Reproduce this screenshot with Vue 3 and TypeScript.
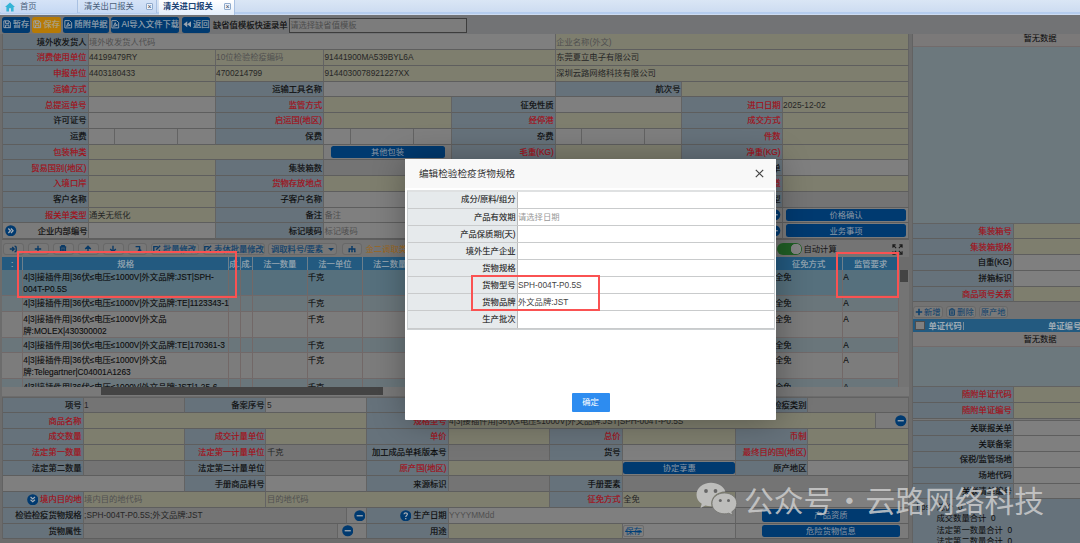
<script setup lang="ts">
type Kind = 'label' | 'need' | 'yellow' | 'white' | 'gray' | 'plain'
interface Cell {
  w: number
  kind: Kind
  text?: string
  hint?: boolean
  btn?: string
  save?: boolean
  dots?: boolean
  lead?: 'right' | 'down' | 'help'
}
type Raw = [number, Kind, string?, Partial<Cell>?]

// Each raw cell is given by its right edge; widths follow from the previous edge.
function rows(start: number, list: Raw[][]): Cell[][] {
  return list.map((r) => {
    let prev = start
    return r.map(([end, kind, text, extra]) => {
      const w = end - prev
      prev = end
      return { w, kind, text, ...extra }
    })
  })
}
const hint = { hint: true }

const header = rows(3, [
  [[88.5, 'label', '境外收发货人'], [555.7, 'white', '境外收发货人代码', hint], [909, 'yellow', '企业名称(外文)', hint]],
  [[88.5, 'need', '消费使用单位'], [215.6, 'yellow', '44199479RY'], [324, 'yellow', '10位检验检疫编码', hint], [555.7, 'yellow', '91441900MA539BYL6A'], [909, 'yellow', '东莞夏立电子有限公司']],
  [[88.5, 'need', '申报单位'], [215.6, 'yellow', '4403180433'], [324, 'yellow', '4700214799'], [555.7, 'yellow', '9144030078921227XX'], [909, 'yellow', '深圳云路网络科技有限公司']],
  [[88.5, 'need', '运输方式'], [215.6, 'yellow'], [324, 'label', '运输工具名称'], [555.7, 'white'], [682.5, 'label', '航次号'], [909, 'yellow']],
  [[88.5, 'need', '总提运单号'], [215.6, 'white'], [324, 'need', '监管方式'], [451.6, 'yellow'], [555.7, 'label', '征免性质'], [682.5, 'white'], [782.6, 'need', '进口日期'], [909, 'yellow', '2025-12-02']],
  [[88.5, 'label', '许可证号'], [215.6, 'white'], [324, 'need', '启运国(地区)'], [451.6, 'yellow'], [555.7, 'need', '经停港'], [682.5, 'yellow'], [782.6, 'need', '成交方式'], [909, 'yellow']],
  [[88.5, 'label', '运费'], [114.7, 'white'], [177.6, 'white'], [215.6, 'white'], [324, 'label', '保费'], [350.6, 'white'], [413.6, 'white'], [451.6, 'white'], [555.7, 'label', '杂费'], [582, 'white'], [645.3, 'white'], [682.5, 'white'], [782.6, 'need', '件数'], [909, 'yellow']],
  [[88.5, 'need', '包装种类'], [324, 'yellow'], [451.6, 'plain', '', { btn: '其他包装' }], [555.7, 'need', '毛重(KG)'], [682.5, 'yellow'], [782.6, 'need', '净重(KG)'], [909, 'yellow']],
  [[88.5, 'need', '贸易国别(地区)'], [215.6, 'yellow'], [324, 'label', '集装箱数'], [451.6, 'gray'], [555.7, 'label'], [682.5, 'white'], [782.6, 'label', '单'], [909, 'white']],
  [[88.5, 'need', '入境口岸'], [215.6, 'yellow'], [324, 'need', '货物存放地点'], [451.6, 'yellow'], [555.7, 'label'], [682.5, 'white'], [782.6, 'need', '道'], [909, 'yellow']],
  [[88.5, 'label', '客户名称'], [215.6, 'yellow'], [324, 'label', '子客户名称'], [451.6, 'white'], [555.7, 'label'], [682.5, 'white'], [782.6, 'label', '型'], [909, 'gray']],
  [[88.5, 'need', '报关单类型'], [215.6, 'yellow', '通关无纸化'], [324, 'label', '备注'], [768, 'white', '备注', hint], [782.6, 'plain', '', { dots: true }], [909, 'plain', '', { btn: '价格确认' }]],
  [[88.5, 'plain', '企业内部编号', { lead: 'right' }], [215.6, 'white'], [324, 'label', '标记唛码'], [768, 'white', '标记唛码', hint], [782.6, 'plain', '', { dots: true }], [909, 'plain', '', { btn: '业务事项' }]],
])

const detail = rows(3, [
  [[83.6, 'label', '项号'], [184.6, 'gray', '1'], [266.5, 'label', '备案序号'], [366.7, 'white', '5'], [448.6, 'label'], [736.5, 'gray'], [808.5, 'label', '检疫类别'], [909, 'gray']],
  [[83.6, 'need', '商品名称'], [366.7, 'yellow'], [448.6, 'need', '规格型号'], [876.5, 'yellow', '4|3|接插件用|36伏≤电压≤1000V|外文品牌:JST|SPH-004T-P0.5S'], [909, 'plain', '', { dots: true }]],
  [[83.6, 'need', '成交数量'], [184.6, 'yellow'], [266.5, 'need', '成交计量单位'], [366.7, 'yellow'], [448.6, 'need', '单价'], [549.6, 'yellow'], [622.7, 'need', '总价'], [736.5, 'yellow'], [808.5, 'need', '币制'], [909, 'yellow']],
  [[83.6, 'need', '法定第一数量'], [184.6, 'yellow'], [266.5, 'need', '法定第一计量单位'], [366.7, 'gray', '千克'], [448.6, 'label', '加工成品单耗版本号'], [549.6, 'gray'], [622.7, 'label', '货号'], [736.5, 'white'], [808.5, 'need', '最终目的国(地区)'], [909, 'yellow']],
  [[83.6, 'label', '法定第二数量'], [184.6, 'gray'], [266.5, 'label', '法定第二计量单位'], [366.7, 'gray'], [448.6, 'need', '原产国(地区)'], [622.7, 'yellow'], [736.5, 'plain', '', { btn: '协定享惠' }], [808.5, 'label', '原产地区'], [909, 'white']],
  [[184.6, 'white'], [266.5, 'label', '手册商品料号'], [366.7, 'white'], [448.6, 'label', '来源标识'], [549.6, 'gray'], [622.7, 'label', '手册要素'], [909, 'gray']],
  [[83.6, 'need', '境内目的地', { lead: 'down' }], [266.5, 'yellow', '境内目的地代码', hint], [549.6, 'yellow', '目的地代码', hint], [622.7, 'need', '征免方式'], [736.5, 'yellow', '全免'], [909, 'white']],
  [[83.6, 'label', '检验检疫货物规格'], [347, 'gray', ';SPH-004T-P0.5S;外文品牌:JST'], [366.7, 'plain', '', { dots: true }], [448.6, 'label', '生产日期', { lead: 'help' }], [736.5, 'white', 'YYYYMMdd', hint], [909, 'plain', '', { btn: '产品资质' }]],
  [[83.6, 'label', '货物属性'], [338, 'gray'], [366.7, 'plain', '', { dots: true }], [448.6, 'label', '用途'], [622.7, 'yellow'], [736.5, 'white', '', { save: true }], [909, 'plain', '', { btn: '危险货物信息' }]],
])

const boxRows: [string, boolean, string][] = [
  ['集装箱号', true, 'yellow'], ['集装箱规格', true, 'yellow'], ['自重(KG)', false, 'white'],
  ['拼箱标识', false, 'white'], ['商品项号关系', true, 'yellow'],
]
const docRows: [string, boolean, string][] = [['随附单证代码', true, 'yellow'], ['随附单证编号', true, 'yellow']]
const linkRows: [string, boolean, string][] = [
  ['关联报关单', false, 'white'], ['关联备案', false, 'white'], ['保税/监管场地', false, 'white'],
  ['场地代码', false, 'white'], ['关联清单编号', false, 'white'],
]

const goods: { lines: string[]; tone: string }[] = [
  { lines: ['4|3|接插件用|36伏≤电压≤1000V|外文品牌:JST|SPH-', '004T-P0.5S'], tone: 'picked' },
  { lines: ['4|3|接插件用|36伏≤电压≤1000V|外文品牌:TE|1123343-1'], tone: 'even' },
  { lines: ['4|3|接插件用|36伏≤电压≤1000V|外文品', '牌:MOLEX|430300002'], tone: 'odd' },
  { lines: ['4|3|接插件用|36伏≤电压≤1000V|外文品牌:TE|170361-3'], tone: 'even' },
  { lines: ['4|3|接插件用|36伏≤电压≤1000V|外文品', '牌:Telegartner|C04001A1263'], tone: 'odd' },
  { lines: ['4|3|接插件用|36伏≤电压≤1000V|外文品牌:JST|1.25-6'], tone: 'even' },
]

const specRows: [string, string, boolean][] = [
  ['成分/原料/组分', '', false], ['产品有效期', '请选择日期', true], ['产品保质期(天)', '', false],
  ['境外生产企业', '', false], ['货物规格', '', false], ['货物型号', 'SPH-004T-P0.5S', false],
  ['货物品牌', '外文品牌:JST', false], ['生产批次', '', false],
]
const forms = [{ name: 'header-form', data: header }, { name: 'detail-form', data: detail }]
</script>

<template>
  <div class="app">
    <nav class="tabs">
      <div class="tab home">
        <svg width="10" height="10" viewBox="0 0 10 10"><path d="M0 5 5 0.5 10 5H8.6V9.6H6V6.3H4V9.6H1.4V5Z" fill="#36b4d6" /></svg>
        首页
      </div>
      <div class="tab">清关出口报关<i>×</i></div>
      <div class="tab on">清关进口报关<i>×</i></div>
    </nav>

    <div class="actions">
      <span class="act a1"><svg class="ai" viewBox="0 0 10 10"><path d="M1 1h6l2 2v6H1ZM3 1v3h4V1M3 9V6h4v3" /></svg>暂存</span>
      <span class="act a2"><svg class="ai" viewBox="0 0 10 10"><path d="M1 1h6l2 2v6H1ZM3 1v3h4V1M3 9V6h4v3" /></svg>保存</span>
      <span class="act a3"><svg class="ai" viewBox="0 0 10 10"><path d="M1 .7h5.5L9 3v6.3H1ZM3 7.5 5 3l.7 2.5L7.5 6 3 7.5" /></svg>随附单据</span>
      <span class="act a4"><svg class="ai" viewBox="0 0 10 10"><path d="M1 .7h5.5L9 3v6.3H1ZM3 7.5 5 3l.7 2.5L7.5 6 3 7.5" /></svg>AI导入文件下载</span>
      <span class="act a5"><svg class="ai solid" viewBox="0 0 10 10"><path d="M5 1.5v7L.5 5ZM9.5 1.5v7L5 5Z" /></svg>返回</span>
      <span class="quick">缺省值模板快速录单</span>
      <span class="template">请选择缺省值模板</span>
    </div>

    <div class="body">
      <main class="left">
        <template v-for="f in forms" :key="f.name">
          <section :class="['form', f.name]">
            <div v-for="(r, i) in f.data" :key="i" class="row">
              <div v-for="(c, j) in r" :key="j" :class="['cell', c.kind, { hint: c.hint, lead: c.lead, spread: c.lead === 'right' }]" :style="{ width: c.w + 'px' }">
                <svg v-if="c.lead" class="round" viewBox="0 0 12 12">
                  <circle cx="6" cy="6" r="5.8" />
                  <path v-if="c.lead === 'right'" d="m3.5 3.7 2.2 2.3-2.2 2.3M6.2 3.7 8.4 6 6.2 8.3" />
                  <path v-else-if="c.lead === 'down'" d="m3.7 3.2 2.3 2 2.3-2M3.7 6 6 8l2.3-2" />
                  <path v-else d="M4.2 4.5C4.3 2.4 7.8 2.5 7.7 4.5 7.6 5.7 6 5.7 6 7.2M6 8.4v1.2" />
                </svg>
                <svg v-if="c.dots" class="round wide" viewBox="0 0 12 12">
                  <circle cx="6" cy="6" r="5.8" /><path d="M2.8 6h6.4" />
                </svg>
                <span v-if="c.btn" class="btn">{{ c.btn }}</span>
                <span v-if="c.save" class="mini">保存</span>
                <span v-if="c.text">{{ c.text }}</span>
              </div>
            </div>
          </section>

          <section v-if="f.name === 'header-form'" class="list">
            <div class="tools">
              <span class="tool t1"><svg viewBox="0 0 10 10"><path d="M1 5h5M4 2.5 6.5 5 4 7.5M7 1.5Q9 1.5 9 3v4Q9 8.5 7 8.5" /></svg></span>
              <span class="tool t2"><svg viewBox="0 0 10 10"><path d="M5 1v8M1 5h8" /></svg></span>
              <span class="tool t3"><svg viewBox="0 0 10 10"><path d="M1 2.5h8M3.5 2.3V1h3v1.3M2 3v6h6V3M4 4v4M6 4v4" /></svg></span>
              <span class="tool t4"><svg viewBox="0 0 10 10"><path d="M1.5 5 5 1.5 8.5 5M5 2v7M3 4h4" /></svg></span>
              <span class="tool t5"><svg viewBox="0 0 10 10"><path d="M5 1v8M1.5 5 5 8.5 8.5 5" /></svg></span>
              <span class="tool t6"><svg viewBox="0 0 10 10"><path d="M2 2h5v6M5 6l2 2 2-2" /></svg></span>
              <span class="tool t7"><svg viewBox="0 0 10 10"><path d="M6 2H1v7h7V6M4 6l5-5" /></svg>批量修改</span>
              <span class="tool t8"><svg viewBox="0 0 10 10"><path d="M6 2H1v7h7V6M4 6l5-5" /></svg>表体批量修改</span>
              <span class="tool t9">调取料号/要素<b></b></span>
              <span class="tool t10"><svg viewBox="0 0 10 10"><path d="M5 2v3M1.500 8V5h7v3M5 5v3M4 2h2M.5 8.300h2M4 8.300h2M7.500 8.300h2" /></svg></span>
              <span class="gold">金二调取类</span>
              <span class="auto"><em></em>自动计算</span>
              <svg class="expand" viewBox="0 0 12 12"><path d="M1 4V1h3M1 1l3.500 3.500M8 1h3v3M11 1 7.500 4.500M1 8v3h3M1 11l3.500-3.500M8 11h3V8M11 11 7.500 7.500" /></svg>
            </div>
            <div class="grid-head">
              <span class="g0">:</span><span class="g1">规格</span><span class="g2">成.</span><span class="g3">成.</span><span class="g4">法一数量</span><span class="g5">法一单位</span><span class="g6">法二数量</span><span class="g7"></span><span class="g8">征免方式</span><span class="g9">监管要求</span>
            </div>
            <div class="grid-wrap">
              <div class="grid-body">
                <div v-for="(g, i) in goods" :key="i" :class="['line', g.tone, { tall: g.lines.length > 1 }]">
                  <span class="g0"></span>
                  <span class="g1"><template v-for="(t, k) in g.lines" :key="k"><br v-if="k" />{{ t }}</template></span>
                  <span class="g2"></span><span class="g3"></span><span class="g4"></span><span class="g5">千克</span><span class="g6"></span><span class="g7"></span><span class="g8">全免</span><span class="g9">A</span>
                </div>
              </div>
              <div class="vbar"><i></i></div>
            </div>
            <div class="hbar"><i></i></div>
          </section>
        </template>
      </main>

      <aside class="right">
        <div class="none n1"><span>暂无数据</span></div>
        <div class="void v1"></div>
        <div v-for="r in boxRows" :key="r[0]" class="row"><div :class="['cell', 'name', r[1] ? 'need' : 'label']">{{ r[0] }}</div><div :class="['cell', 'rest', r[2]]"></div></div>
        <div class="side-tools">
          <span class="st"><svg viewBox="0 0 10 10"><path d="M5 1v8M1 5h8" /></svg>新增</span>
          <span class="st"><svg class="thin" viewBox="0 0 10 10"><path d="M1 2.5h8M3.5 2.3V1h3v1.3M2 3v6h6V3M4 4v4M6 4v4" /></svg>删除</span>
          <span class="st">原产地</span>
        </div>
        <div class="side-head"><i></i><span class="sh1">单证代码</span><span class="sh2">单证编号</span></div>
        <div class="none n2"><span>暂无数据</span></div>
        <div class="void v2"></div>
        <div v-for="r in docRows" :key="r[0]" class="row"><div :class="['cell', 'name', r[1] ? 'need' : 'label']">{{ r[0] }}</div><div :class="['cell', 'rest', r[2]]"></div></div>
        <div class="gap"></div>
        <div v-for="r in linkRows" :key="r[0]" class="row"><div :class="['cell', 'name', r[1] ? 'need' : 'label']">{{ r[0] }}</div><div :class="['cell', 'rest', r[2]]"></div></div>
        <div class="totals">
          <p class="first">hps&nbsp;&nbsp; 总价&nbsp; 0</p>
          <p>成交数量合计&nbsp; 0</p>
          <p>法定第一数量合计&nbsp; 0</p>
          <p>法定第二数量合计&nbsp; 0</p>
        </div>
      </aside>
    </div>

    <div class="dialog">
      <header>编辑检验检疫货物规格
        <svg width="9" height="9" viewBox="0 0 9 9"><path d="m.8.8 7.4 7.4M8.2.8.8 8.2" stroke="#444" stroke-width="1.2" /></svg>
      </header>
      <div class="spec">
        <div v-for="s in specRows" :key="s[0]" class="srow"><label>{{ s[0] }}</label><span :class="{ ph: s[2] }">{{ s[1] }}</span></div>
      </div>
      <button class="ok">确定</button>
    </div>

    <div class="mark m1"></div>
    <div class="mark m2"></div>
    <div class="mark m3"></div>

    <div class="sign">
      <svg width="42" height="34" viewBox="0 0 42 34">
        <path d="M15 .8C6.8 .8 .5 6 .5 12.7c0 3.8 2 6.9 5.2 9.1L4.5 26l4.8-2.500c2 .6 4 .9 6.300 .8C13.700 16 20.300 9.500 29.300 9.500 27.800 4.300 22 .8 15 .8Z" fill="#bdbdbb" />
        <path d="M28.500 11C21.300 11 16 15.600 16 21.400s5.300 10.400 12.500 10.400c1.500 0 3-.2 4.300-.6l4 2-1-3.400c3-1.900 5-5 5-8.400C40.800 15.600 35.600 11 28.500 11Z" fill="#bdbdbb" stroke="#737370" stroke-width=".8" />
        <g fill="#666"><circle cx="10" cy="9" r="1.900" /><circle cx="19.500" cy="9" r="1.900" /><circle cx="24.300" cy="18.500" r="1.500" /><circle cx="32.500" cy="18.500" r="1.500" /></g>
      </svg>
      <span class="s1">公众号</span><span class="dot">·</span><span class="s2">云路网络科技</span>
    </div>
  </div>
</template>

<style>
html, body { margin: 0; overflow: hidden; background: #666; }
</style>

<style scoped>
* { box-sizing: border-box; }
.app { position: relative; width: 1080px; height: 543px; overflow: hidden; display: flex; flex-direction: column; background: #6c6c6c; color: #0c0c0c; font: 8.3px/1 "Liberation Sans", "Noto Sans CJK SC", sans-serif; white-space: nowrap; }
.tabs { height: 15px; flex: none; display: flex; gap: 2px; padding-left: 1px; background: linear-gradient(#dae6f5, #cddcf1 80%, #b5cdee 82%, #b5cdee 92%, #dfe8f5); }
.tab { width: 77px; height: 13px; padding: 0 3px 0 4px; display: flex; align-items: center; background: linear-gradient(#d5e3f7, #c5d8f3); color: #4a5e7a; border-right: 1px solid #a9c1e2; }
.tab.home { gap: 5px; }
.tab.on { width: 76px; height: 15px; padding-bottom: 2px; background: linear-gradient(#fff, #e3edfa); color: #1d4373; font-weight: 700; }
.tab i { margin-left: auto; width: 7px; height: 7px; border: 1px solid #8faacc; border-radius: 1px; font: 7px/5px "Liberation Sans", sans-serif; text-align: center; color: #345; background: #edf3fb; }
.actions { height: 19.3px; flex: none; padding: 1.5px 0 0 1.7px; display: flex; align-items: flex-start; background: #727375; }
.act { height: 16px; flex: none; display: flex; align-items: center; justify-content: center; gap: 1.5px; border-radius: 2.5px; background: #003a70; color: #9aa5b0; -webkit-text-stroke: .15px; }
.ai { width: 8.5px; height: 8.5px; flex: none; fill: none; stroke: #9aa5b0; stroke-width: 1.1; }
.ai.solid { fill: #9aa5b0; stroke: none; }
.a1 { width: 28.5px; }
.a2 { width: 29px; margin-left: 2px; background: #b67a05; color: #aaa58e; }
.a3 { width: 45.5px; margin-left: 2px; }
.a4 { width: 68.5px; margin-left: 2.3px; }
.a5 { width: 28.5px; margin-left: 2.5px; }
.quick { margin-left: 2.5px; line-height: 16px; -webkit-text-stroke: .15px; }
.template { margin-left: 1.5px; margin-top: 1.5px; width: 178px; height: 15px; border: 1px solid #3d3d3d; background: #7c7c7c; color: #4d4d4d; line-height: 13px; }
.body { flex: 1; min-height: 0; display: flex; gap: 2.5px; }
.left { width: 909px; flex: none; padding-left: 2px; }
.right { flex: 1; min-width: 0; overflow: hidden; }
.form { width: 907px; overflow: hidden; border-top: 1px solid #626262; border-left: 1px solid #626262; }
.header-form { border-top: 0; }
.row { display: flex; height: 15.76px; }
.cell { flex: none; height: 100%; overflow: hidden; display: flex; align-items: center; border-right: 1px solid #636363; border-bottom: 1px solid #5e5e5e; padding-left: .5px; color: #262626; }
.label, .need { background: #66727b; justify-content: flex-end; padding-right: 1px; color: #0b0b0b; -webkit-text-stroke: .15px; }
.need { color: #a30e17; }
.yellow { background: #7e7e6e; }
.white { background: #7f7f7f; }
.gray { background: #747474; }
.plain { background: #7b7b7b; justify-content: center; }
.hint { color: #505050; }
.lead { gap: 2px; }
.spread { justify-content: space-between; padding: 0 0 0 2px; color: #0b0b0b; -webkit-text-stroke: .15px; }
.btn { flex: 1; height: 12.5px; border-radius: 2.5px; background: #003a70; color: #8b98a5; display: flex; align-items: center; justify-content: center; }
.header-form .btn { margin: 0 6px; }
.header-form .row:nth-child(n + 12) .btn { margin: 0 2px 0 3px; }
.detail-form .row:nth-child(5) .btn { margin: 0; }
.detail-form .row:nth-child(n + 8) .btn { margin: 0 8px 0 25px; }
.mini { border: 1px solid #6b6b6b; border-radius: 2px; padding: 1px; color: #003f78; text-decoration: line-through; margin-right: auto; }
.round { width: 11.5px; height: 11.5px; flex: none; fill: #003a70; }
.round path { fill: none; stroke: #a5adb5; stroke-width: 1.3; }
.detail-form .row:nth-child(2) .wide { margin-left: 17px; }
.detail-form .row:nth-child(8) .wide { margin-left: 6px; }
.detail-form .row:nth-child(9) .wide { margin-right: 9px; }

.list { width: 907px; height: 157.7px; overflow: hidden; }
.tools { height: 18.3px; padding: 3px 0 2px 1px; display: flex; align-items: center; background: #747474; border-top: 1px solid #5f5f5f; color: #0c3f6c; }
.tool { height: 12px; flex: none; display: flex; align-items: center; justify-content: center; gap: 2px; border: 1px solid #686868; border-radius: 3px; background: #777; margin-right: 4.5px; -webkit-text-stroke: .15px; }
.tool svg { width: 8px; height: 8px; fill: none; stroke: #0a3a66; stroke-width: 1.7; }
.t1, .t2, .t3, .t4, .t5 { width: 20.5px; }
.t6 { width: 19px; }
.t7 { width: 48px; margin-left: -1px; }
.t8 { width: 62px; margin-right: 3px; }
.t9 { width: 69px; justify-content: space-between; padding: 0 2px; }
.t9 b { border: 3px solid transparent; border-top: 3.5px solid #0a3a66; border-bottom: 0; }
.t10 { width: 20px; margin-right: 4px; }
.gold { width: 40px; color: #9c671d; }
.auto { margin-left: 371px; display: flex; align-items: center; gap: 2px; color: #151515; }
.auto em { width: 25px; height: 12px; border-radius: 6px; background: radial-gradient(circle at 19px 6px, #858585 5px, #205f25 5.5px); }
.expand { width: 11px; height: 11px; margin-left: auto; margin-right: 6px; fill: none; stroke: #1b1b1b; stroke-width: 1.2; }
.grid-head { height: 12.7px; display: flex; width: 897px; background: #235a80; color: #9daab4; -webkit-text-stroke: .15px; }
.grid-head span { flex: none; display: flex; align-items: center; justify-content: center; overflow: hidden; border-right: 1px solid #6c7f8c; }
.g0 { width: 21.3px; }
.g1 { width: 205.7px; }
.g2 { width: 12px; }
.g3 { width: 12px; }
.g4 { width: 54.7px; }
.g5 { width: 55.5px; }
.g6 { width: 54px; }
.g7 { width: 357.8px; }
.g8 { width: 68.3px; }
.g9 { width: 55.7px; }
.grid-wrap { height: 116.5px; display: flex; }
.grid-body { width: 897px; overflow: hidden; }
.line { height: 15.5px; display: flex; border-bottom: 1px solid #716969; -webkit-text-stroke: .1px; }
.line.tall { height: 26.1px; }
.line span { flex: none; border-right: 1px solid #726867; line-height: 12px; padding-top: 1.2px; }
.picked { background: #56707d; }
.even { background: #6a767b; }
.odd { background: #7c7c7c; }
.vbar { width: 10px; background: #747474; padding: 0 1px; }
.vbar i { display: block; height: 12px; background: #444; }
.hbar { height: 9px; background: #797979; }
.hbar i { display: block; margin-left: 99px; width: 282px; height: 8px; background: #444; }

.right { border-left: 1px solid #626262; }
.right .name { width: 101.3px; }
.right .rest { width: 80px; }
.none { width: 255px; display: flex; justify-content: center; background: #7b7979; border-bottom: 1px solid #726b6b; color: #090909; }
.n1 { height: 13.2px; }
.n2 { height: 15.3px; align-items: center; }
.void { background: #6c787d; border-bottom: 1px solid #626262; }
.v1 { height: 176.2px; }
.v2 { height: 40px; }
.side-tools { height: 17px; display: flex; align-items: center; gap: 3px; padding: 3px 0 1px 0; color: #0c3f6c; background: #737373; }
.st { height: 11.5px; display: flex; align-items: center; gap: 1.5px; padding: 0 1px; border: 1px solid #686868; border-radius: 3px; background: #797979; }
.st svg { width: 8px; height: 8px; fill: none; stroke: #0c3f6c; stroke-width: 2; }
.st .thin { stroke-width: 1.2; }
.side-head { height: 12.5px; display: flex; align-items: center; background: #235a80; color: #9daab4; font-weight: 700; }
.side-head i { flex: none; width: 9.5px; height: 9.5px; margin: 0 4px 0 2.5px; background: #808080; border: 1px solid #4d4d4d; }
.sh1 { flex: none; width: 35px; border-right: 1px solid #7b8d98; }
.sh2 { flex: none; margin-left: 84.5px; }
.gap { height: 2px; border-bottom: 1px solid #5f5f5f; background: #777; }
.totals { height: 60px; background: #66727b; padding: 2.7px 0 0 24px; }
.totals p { margin: 0; line-height: 11.3px; }
.totals .first { margin-left: -20px; }

.dialog { position: absolute; left: 405px; top: 159px; width: 371px; height: 261px; background: #fff; border-radius: 1px; box-shadow: 1px 1px 34px rgba(0, 0, 0, .32); color: #222; }
.dialog header { height: 29px; display: flex; align-items: center; justify-content: space-between; padding: 0 12.5px 0 14px; background: #f8f8f8; font-size: 9.65px; color: #333; }
.spec { margin: 1.5px 1px 0 2px; border: 1px solid #ccd0d2; border-top: 2px solid #dfe1e2; }
.srow { height: 17.15px; display: flex; border-bottom: 1px solid #c9cbcc; }
.srow label { width: 110px; display: flex; align-items: center; justify-content: flex-end; padding-right: 1.5px; background: #e6eaec; border-right: 1px solid #bbb; -webkit-text-stroke: .1px; }
.srow span { display: flex; align-items: center; color: #444; }
.srow .ph { color: #999; }
.ok { display: flex; align-items: center; justify-content: center; width: 38px; height: 19px; margin: 63px 0 0 166.5px; border: 0; border-radius: 1px; background: #2d8cf0; color: #fff; font: inherit; }

.mark { position: absolute; border: 2.5px solid #fa5252; }
.m1 { left: 17px; top: 251px; width: 220px; height: 47px; }
.m2 { left: 471px; top: 275px; width: 129px; height: 36px; }
.m3 { left: 836px; top: 252px; width: 63px; height: 46px; }
.sign { position: absolute; left: 696px; top: 482px; height: 34px; display: flex; align-items: center; color: rgba(205, 205, 205, .86); font: 29.8px/34px "Noto Sans CJK SC", sans-serif; }
.s1 { margin-left: 6px; }
.dot { width: 32px; text-align: center; }
</style>
